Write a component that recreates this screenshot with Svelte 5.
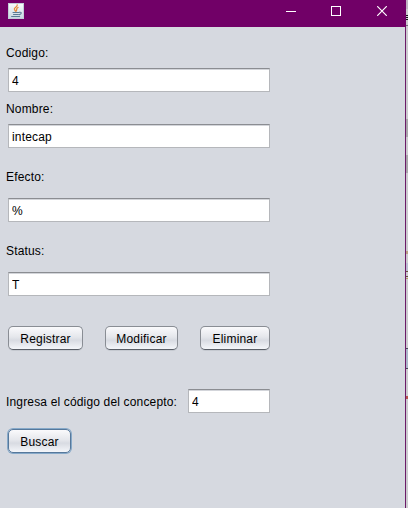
<script>
  let codigo = $state('4');
  let nombre = $state('intecap');
  let efecto = $state('%');
  let status = $state('T');
  let concepto = $state('4');
  const marks = [
    [0, 9, '#c0b4c2'], [15, 1, '#161018'], [17, 1, '#161018'], [19, 1, '#161018'], [25, 1, '#75677a'],
    [119, 18, '#aaa6ac'], [155, 18, '#aaa6ac'], [251, 3, '#b9a083'], [263, 8, '#bdbdd3'],
    [271, 1, '#69513f'], [276, 1, '#69513f'], [278, 1, '#b59a62'],
    [348, 1, '#48485c'], [349, 19, '#adb7cb'], [368, 1, '#48485c'], [396, 3, '#b8524e']
  ];
</script>

<div class="screen">
  <div class="window">
    <header>
      <svg class="java" width="16" height="16" viewBox="0 0 16 16">
        <defs><linearGradient id="tile" x2="0" y2="1"><stop stop-color="#fbfcfd" /><stop offset="1" stop-color="#c7d8e1" /></linearGradient></defs>
        <rect x=".5" y=".5" width="15" height="15" fill="url(#tile)" stroke="#c3ced8" />
        <g fill="none" stroke-linecap="round">
          <path d="M9.2 2C9.6 4 5.7 4.4 6.4 6.2L7.3 8M10 4.5C7.4 5.7 9.7 6.6 8 8.3" stroke="#e58a35" stroke-width="1.3" />
          <path d="M5 9.5H10.8M5.5 11.5H10.2M3.6 13.5H11.6M11.4 9.3C14.3 8.7 13.5 11.3 11.2 11.6" stroke="#5b7b94" stroke-width="1.1" />
        </g>
      </svg>
      <div class="controls">
        <svg width="10" height="10" viewBox="0 0 10 10"><path d="M0 5.5H10" /></svg>
        <svg width="10" height="10" viewBox="0 0 10 10"><rect x=".5" y=".5" width="9" height="9" /></svg>
        <svg width="10" height="10" viewBox="0 0 10 10"><path d="M.2 .2L9.8 9.8M9.8 .2L.2 9.8" stroke-width="1.2" /></svg>
      </div>
    </header>
    <main>
      <label for="codigo">Codigo:</label>
      <input id="codigo" bind:value={codigo} />
      <label for="nombre" class="l2">Nombre:</label>
      <input id="nombre" bind:value={nombre} />
      <label for="efecto" class="l3">Efecto:</label>
      <input id="efecto" class="far" bind:value={efecto} />
      <label for="status" class="l4">Status:</label>
      <input id="status" class="far" bind:value={status} />
      <div class="actions">
        <button style:width="75px">Registrar</button>
        <button style:width="73px">Modificar</button>
        <button style:width="70px">Eliminar</button>
      </div>
      <div class="search">
        <label for="concepto">Ingresa el código del concepto:</label>
        <input id="concepto" bind:value={concepto} />
      </div>
      <button class="focused">Buscar</button>
    </main>
  </div>
  <svg class="behind" width="2" height="508">
    <rect width="2" height="508" fill="#cdcbd0" />
    {#each marks as [y, h, color]}
      <rect {y} width="2" height={h} fill={color} />
    {/each}
  </svg>
</div>

<style>
  :global(body) { background: #fff; }
  .screen { display: flex; width: 415px; height: 508px; overflow: hidden; background: #fff; font: 12px/15px "Liberation Sans", Arial, sans-serif; color: #000; }
  .window { box-sizing: border-box; width: 406px; height: 508px; border-right: 1px solid #6c1b68; background: #d6d9e0; }
  .behind { display: block; }
  header { display: flex; justify-content: space-between; box-sizing: border-box; width: 406px; height: 27px; padding: 3px 19px 0 8px; background: #710067; }
  .java { display: block; }
  .controls { display: flex; gap: 35px; padding-top: 3px; }
  .controls svg { display: block; fill: none; stroke: #fff; }
  .controls svg:nth-child(3) { margin-left: 1px; }
  main { display: flex; flex-direction: column; align-items: flex-start; padding: 19px 0 0 6px; }
  label { display: block; height: 15px; letter-spacing: .16px; white-space: nowrap; }
  input { box-sizing: border-box; width: 262px; height: 24px; margin: 7px 0 0 2px; padding: 1px 3px 0; border: 1px solid #b5b7bb; border-top-color: #8b8d92; border-radius: 0; background: #fff; box-shadow: inset 0 1px #d3d5da; font: inherit; letter-spacing: .16px; color: #000; outline: none; }
  .l2 { margin-top: 10px; }
  .l3 { margin-top: 22px; }
  .l4 { margin-top: 22px; }
  .far { margin-top: 13px; }
  .actions { display: flex; gap: 22px; margin: 30px 0 0 2px; }
  button { box-sizing: border-box; height: 24px; padding: 2px 0 0; border: 1px solid #898d94; border-bottom-color: #595e67; border-radius: 5px; background: linear-gradient(#fafafc, #e5e7ec 45%, #d8dbe2 60%, #f4f6fa); box-shadow: 0 1px #c5c9d0; font: inherit; letter-spacing: .19px; color: #000; }
  .search { display: flex; margin-top: 39px; }
  .search label { width: 180px; margin-top: 6px; }
  .search input { width: 82px; margin-top: 0; }
  .focused { width: 63px; margin: 16px 0 0 2px; border-color: #56789b; box-shadow: 0 0 0 1px #86a9c9; }
</style>
